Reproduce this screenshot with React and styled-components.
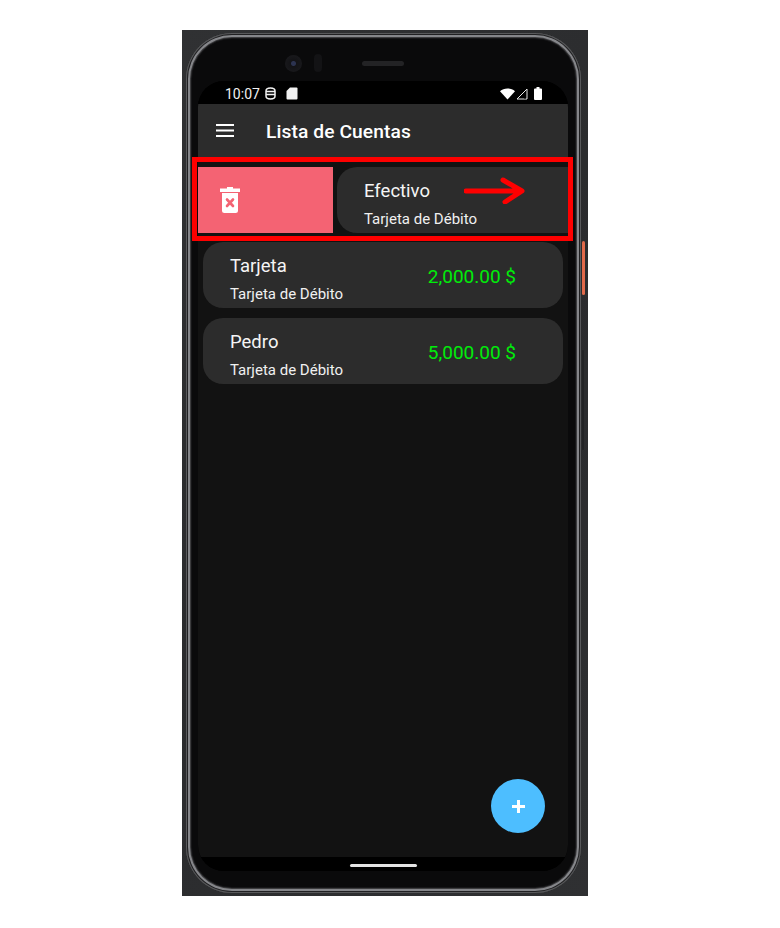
import React from 'react';
import styled, { createGlobalStyle } from 'styled-components';

const Global = createGlobalStyle`
  html, body { margin: 0; padding: 0; background: #fff; }
  body { font-family: Roboto, "Liberation Sans", sans-serif; }
`;

const Stage = styled.div`
  width: 780px;
  height: 928px;
  box-sizing: border-box;
  padding: 30px 0 0 182px;
  overflow: hidden;
`;

const Backdrop = styled.div`
  position: relative;
  width: 406px;
  height: 866px;
  box-sizing: border-box;
  padding: 3px 7px 3px 4px;
  background: linear-gradient(135deg, #303133, #2a2b2d 50%, #2f3032);
`;

const Device = styled.div`
  width: 395px;
  height: 860px;
  box-sizing: border-box;
  padding: 0 13px 22px 12px;
  border-radius: 46px;
  background: #0a0a0b;
  box-shadow:
    inset 0 0 0 1px #58595b,
    inset 0 0 0 2px #202022,
    inset 0 0 0 4px #85868a,
    inset 0 0 0 5px #3c3c3e,
    inset 0 0 0 6px #161618;
  display: flex;
  flex-direction: column;
`;

const TopBezel = styled.div`
  height: 48px;
  flex: none;
  display: flex;
  align-items: center;
  padding-top: 12px;
  box-sizing: border-box;
`;

const Camera = styled.div`
  width: 17px;
  height: 17px;
  margin-left: 87px;
  border-radius: 50%;
  background: radial-gradient(circle at 50% 50%, #2c3350 0 2px, #131316 3px, #18181b 8px);
`;

const Sensor = styled.div`
  width: 8px;
  height: 18px;
  margin-left: 12px;
  border-radius: 4px;
  background: #131315;
`;

const Speaker = styled.div`
  width: 42px;
  height: 5px;
  margin-left: 40px;
  border-radius: 3px;
  background: #232325;
`;

const Screen = styled.div`
  position: relative;
  width: 370px;
  flex: 1;
  display: flex;
  flex-direction: column;
  border-radius: 26px;
  overflow: hidden;
  background: #000;
`;

const StatusBar = styled.div`
  height: 23px;
  flex: none;
  display: flex;
  align-items: center;
  padding: 2px 26px 0 27px;
  box-sizing: border-box;
  color: #f2f2f2;
  background: #000;
`;

const Time = styled.span`
  font-size: 14px;
  line-height: 18px;
  width: 40px;
`;

const Spacer = styled.div`
  flex: 1;
`;

const StatusIcon = styled.svg`
  display: block;
  flex: none;
  margin-right: ${p => p.$gap || 0}px;
`;

const Header = styled.header`
  height: 53px;
  flex: none;
  display: flex;
  align-items: center;
  padding: 0 0 0 18px;
  box-sizing: border-box;
  background: #2c2c2c;
  color: #fff;
`;

const Title = styled.h1`
  margin: 2px 0 0 32px;
  font-size: 19.2px;
  font-weight: 500;
  letter-spacing: 0.1px;
`;

const Content = styled.main`
  position: relative;
  height: 700px;
  flex: none;
  box-sizing: border-box;
  padding-top: 10px;
  background: #121212;
`;

const SwipeRow = styled.div`
  display: flex;
  gap: 4px;
  height: 66px;
  margin-bottom: 9px;
`;

const DeletePanel = styled.div`
  width: 135px;
  flex: none;
  display: flex;
  align-items: center;
  padding-left: 22px;
  box-sizing: border-box;
  background: #f46373;
`;

const Card = styled.div`
  height: 66px;
  display: flex;
  justify-content: space-between;
  box-sizing: border-box;
  padding: 12px 47px 0 27px;
  border-radius: ${p => (p.$swiped ? '20px 0 0 20px' : '20px')};
  background: #2c2c2c;
  color: #fff;
  ${p => (p.$swiped ? 'flex: 1;' : 'margin: 0 5px 10px;')}
`;

const Name = styled.div`
  font-size: 18.5px;
  line-height: 24px;
  color: #f5f5f5;
`;

const Sub = styled.div`
  margin-top: 6px;
  font-size: 15px;
  line-height: 20px;
  color: #f0f0f0;
`;

const Amount = styled.div`
  padding-top: 11px;
  font-size: 19px;
  line-height: 24px;
  color: #00ec0a;
`;

const Highlight = styled.div`
  position: absolute;
  left: 10px;
  top: 127px;
  width: 381px;
  height: 84px;
  box-sizing: border-box;
  border: 5px solid #fe0000;
`;

const Arrow = styled.svg`
  position: absolute;
  left: 267px;
  top: 14px;
`;

const Fab = styled.button`
  position: absolute;
  right: 23px;
  bottom: 24px;
  width: 54px;
  height: 54px;
  padding: 0;
  border: 0;
  border-radius: 50%;
  display: flex;
  align-items: center;
  justify-content: center;
  background: #4dbeff;
`;

const NavBar = styled.div`
  height: 14px;
  flex: none;
  display: flex;
  justify-content: center;
  padding-top: 7px;
  box-sizing: border-box;
  background: #000;
`;

const HomeBar = styled.div`
  width: 67px;
  height: 3px;
  border-radius: 2px;
  background: #e4e4e4;
`;

const SideButton = styled.div`
  position: absolute;
  left: ${p => p.$left}px;
  top: ${p => p.$top}px;
  width: ${p => p.$w}px;
  height: ${p => p.$h}px;
  border-radius: 2px;
  background: ${p => p.$color};
`;

const Row = ({ name, amount }) => (
  <Card>
    <div>
      <Name>{name}</Name>
      <Sub>Tarjeta de Débito</Sub>
    </div>
    <Amount>{amount}</Amount>
  </Card>
);

export default function App() {
  return (
    <Stage>
      <Global />
      <Backdrop>
        <Device>
          <TopBezel>
            <Camera />
            <Sensor />
            <Speaker />
          </TopBezel>
          <Screen>
            <StatusBar>
              <Time>10:07</Time>
              <StatusIcon $gap={10} width="11" height="13" viewBox="0 0 11 13" fill="none" stroke="#f2f2f2" strokeWidth="1.5">
                <path d="M1 4C1 2 2.500 1 5.500 1S10 2 10 4V9C10 11 8 12 5.500 12S1 11 1 9ZM1 4.500H10M1.500 7.500H9.500" />
              </StatusIcon>
              <StatusIcon width="12" height="13" viewBox="0 0 12 13" fill="#f2f2f2">
                <path d="M4 0.500H10.500a1 1 0 0 1 1 1V11.500a1 1 0 0 1-1 1H1.500a1 1 0 0 1-1-1V4Z" />
              </StatusIcon>
              <Spacer />
              <StatusIcon $gap={1} width="15" height="12" viewBox="0 0 15 12" fill="#fff">
                <path d="M0 3.200C2 1.400 4.600 0.500 7.500 0.500S13 1.400 15 3.200L7.500 11.500Z" />
              </StatusIcon>
              <StatusIcon $gap={6} width="12" height="12" viewBox="0 0 12 12" fill="none" stroke="#e8e8e8" strokeWidth="1">
                <path d="M1 11H11V1Z" />
                <path d="M9 11V4.500" stroke="#000" strokeWidth="1" />
              </StatusIcon>
              <StatusIcon width="8" height="13" viewBox="0 0 8 13" fill="#fff">
                <path d="M2.500 0h3v1.500H7a1 1 0 0 1 1 1V12a1 1 0 0 1-1 1H1a1 1 0 0 1-1-1V2.500a1 1 0 0 1 1-1h1.500Z" />
              </StatusIcon>
            </StatusBar>
            <Header>
              <svg width="18" height="14" viewBox="0 0 18 14" fill="#fff" style={{ flex: 'none' }}>
                <rect y="0" width="18" height="2" />
                <rect y="5.500" width="18" height="2" />
                <rect y="11" width="18" height="2" />
              </svg>
              <Title>Lista de Cuentas</Title>
            </Header>
            <Content>
              <SwipeRow>
                <DeletePanel>
                  <svg width="20" height="26" viewBox="0 0 20 26">
                    <path fill="#fff" d="M7 0h6v1.500h7V5H0V1.500h7ZM2 6h16v17.500a2.500 2.500 0 0 1-2.500 2.500h-11A2.500 2.500 0 0 1 2 23.500Z" />
                    <path stroke="#f46373" strokeWidth="2.600" strokeLinecap="round" d="M7 12.500l6 6.500M13 12.500l-6 6.500" />
                  </svg>
                </DeletePanel>
                <Card $swiped>
                  <div>
                    <Name>Efectivo</Name>
                    <Sub>Tarjeta de Débito</Sub>
                  </div>
                </Card>
              </SwipeRow>
              <Row name="Tarjeta" amount="2,000.00 $" />
              <Row name="Pedro" amount="5,000.00 $" />
              <Fab aria-label="Agregar">
                <svg width="13" height="13" viewBox="0 0 13 13" stroke="#fff" strokeWidth="3">
                  <path d="M6.500 0V13M0 6.500H13" />
                </svg>
              </Fab>
            </Content>
            <NavBar>
              <HomeBar />
            </NavBar>
          </Screen>
        </Device>
        <Highlight>
          <Arrow width="62" height="28" viewBox="0 0 62 28" fill="none" stroke="#fe0000" strokeWidth="5" strokeLinecap="round" strokeLinejoin="round">
            <path d="M2 15H56M39 4L58 15L41 26" />
          </Arrow>
        </Highlight>
        <SideButton $left={400} $top={211} $w={3} $h={54} $color="#e0694a" />
        <SideButton $left={400} $top={320} $w={2} $h={100} $color="#222325" />
      </Backdrop>
    </Stage>
  );
}
